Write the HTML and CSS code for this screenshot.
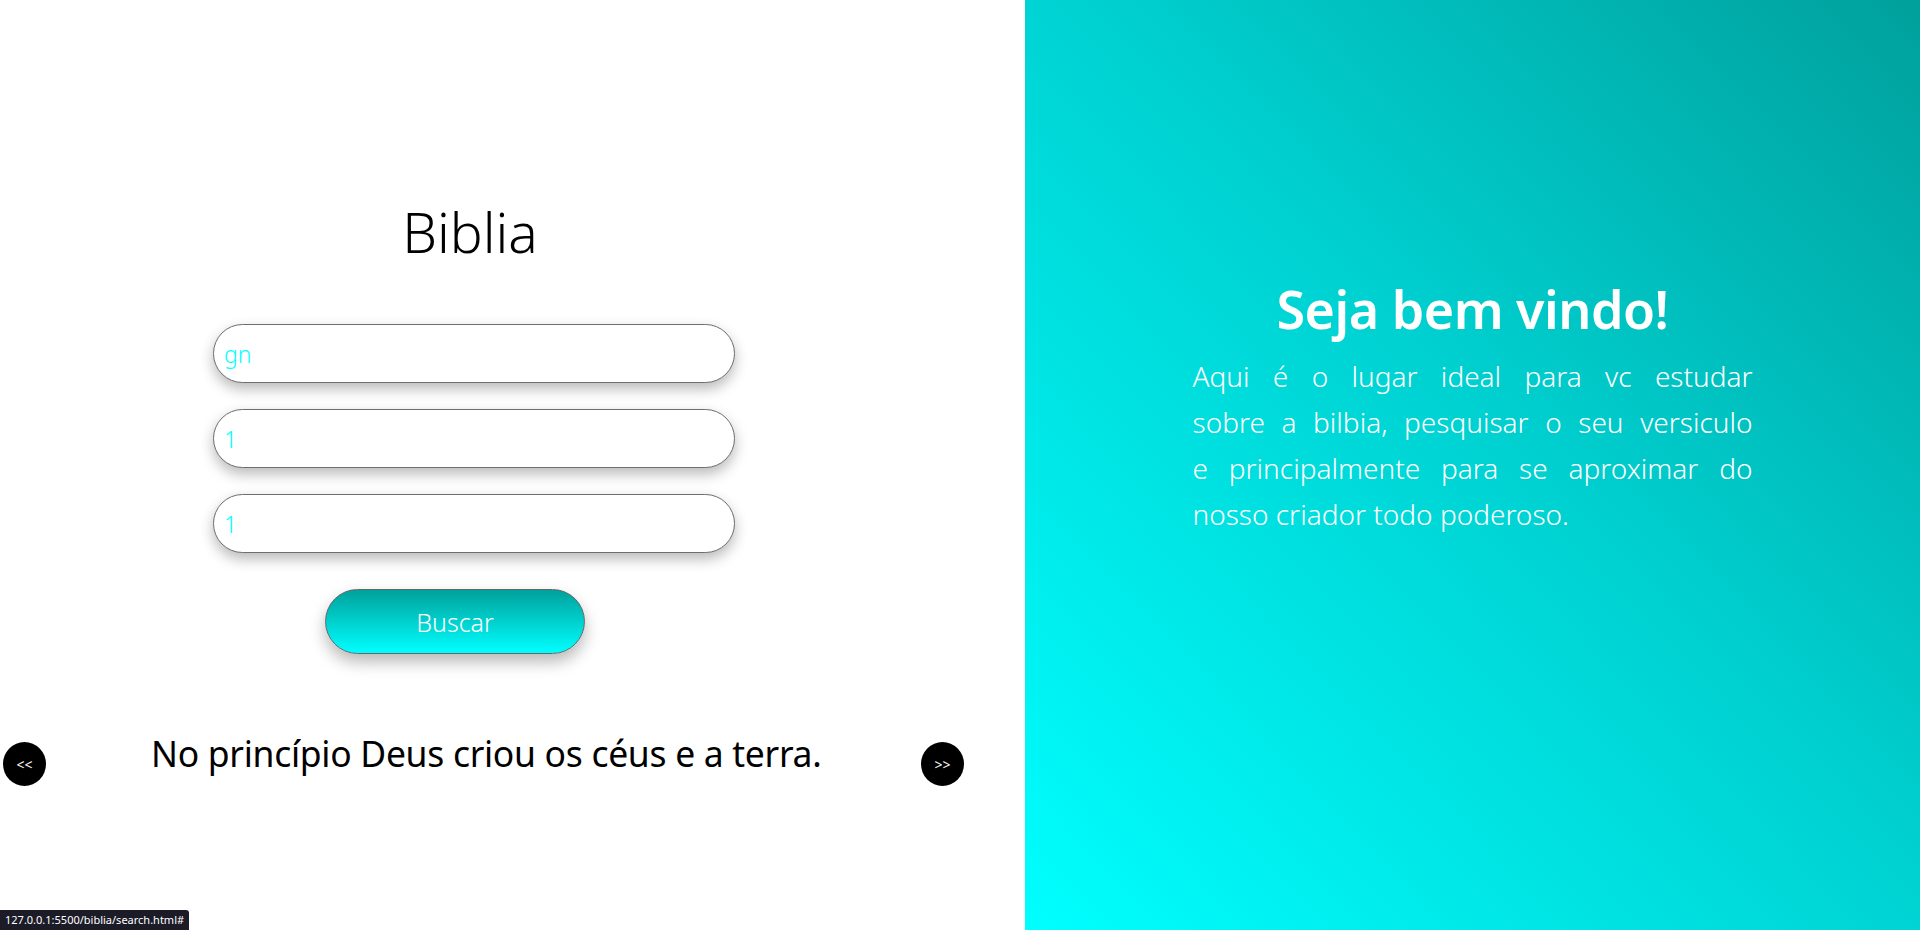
FILE: index.html
```html
<!DOCTYPE html>
<html lang="pt-BR">
<head>
<meta charset="utf-8">
<title>Biblia</title>
<link rel="stylesheet" href="styles.css">
</head>
<body>
<main class="page">
  <section class="left">
    <div class="search">
      <h1 class="title">Biblia</h1>
      <form class="form">
        <input class="field" type="text" value="gn">
        <input class="field" type="text" value="1">
        <input class="field" type="text" value="1">
        <button class="btn" type="button">Buscar</button>
      </form>
    </div>
    <div class="verse-row">
      <a class="nav nav-prev" href="#">&lt;&lt;</a>
      <p class="verse">No princípio Deus criou os céus e a terra.</p>
      <a class="nav nav-next" href="#">&gt;&gt;</a>
    </div>
  </section>
  <section class="right">
    <h2 class="welcome">Seja bem vindo!</h2>
    <p class="intro">
      <span class="line">Aqui é o lugar ideal para vc estudar</span>
      <span class="line">sobre a bilbia, pesquisar o seu versiculo</span>
      <span class="line">e principalmente para se aproximar do</span>
      <span class="line line-last">nosso criador todo poderoso.</span>
    </p>
  </section>
</main>
<div class="status">127.0.0.1:5500/biblia/search.html#</div>
</body>
</html>
```
FILE: styles.css
```css
html, body {
  margin: 0;
  padding: 0;
  height: 100%;
}
body {
  font-family: "Noto Sans", "Open Sans", sans-serif;
  background: #fff;
  overflow: hidden;
}
.page {
  display: flex;
  height: 930px;
}
.left {
  width: 1025px;
  flex: none;
  display: flex;
  flex-direction: column;
}
.search {
  width: 522px;
  margin-left: 213px;
  padding-top: 204px;
}
.title {
  margin: 0;
  text-align: center;
  font-weight: 300;
  font-size: 55px;
  line-height: 56px;
  color: #000;
  padding-right: 8px;
}
.form {
  margin-top: 64px;
  display: flex;
  flex-direction: column;
  gap: 26px;
}
.field {
  box-sizing: border-box;
  width: 522px;
  height: 59px;
  border: 1px solid #6e6e6e;
  border-radius: 30px;
  padding: 0 10px;
  font-family: inherit;
  font-weight: 300;
  font-size: 23px;
  color: #00ffff;
  background: #fff;
  box-shadow: 0 6px 14px rgba(0, 0, 0, 0.28);
  outline: none;
}
.btn {
  box-sizing: border-box;
  width: 260px;
  height: 65px;
  margin-left: 112px;
  margin-top: 10px;
  border: 1px solid #666;
  border-radius: 33px;
  background: linear-gradient(to bottom, #00a19b, #00ffff);
  color: #fff;
  font-family: inherit;
  font-weight: 300;
  font-size: 25px;
  box-shadow: 0 8px 16px rgba(0, 0, 0, 0.28);
  cursor: pointer;
}
.verse-row {
  display: flex;
  align-items: center;
  margin-top: 75px;
  padding-left: 3px;
}
.nav {
  width: 43px;
  height: 44px;
  border-radius: 50%;
  background: #000;
  color: #fff;
  font-size: 14px;
  display: flex;
  align-items: center;
  justify-content: center;
  text-decoration: none;
  flex: none;
}
.verse {
  margin: 0 0 22px 105px;
  width: 770px;
  font-size: 35.5px;
  font-weight: 400;
  letter-spacing: -0.3px;
  color: #000;
}
.right {
  flex: 1;
  background: linear-gradient(to top right, #00ffff 0%, #00cfcf 55%, #00a09c 100%);
  color: #fff;
  display: flex;
  flex-direction: column;
  align-items: center;
  padding-top: 277px;
  box-sizing: border-box;
}
.welcome {
  margin: 0;
  font-size: 52px;
  font-weight: 600;
  line-height: 64px;
  letter-spacing: -0.5px;
}
.intro {
  margin: 12px 0 0 0;
  width: 560px;
  font-size: 28px;
  font-weight: 300;
  line-height: 46px;
}
.line {
  display: block;
  white-space: nowrap;
  text-align: justify;
  text-align-last: justify;
}
.line-last {
  text-align-last: left;
}
.status {
  position: fixed;
  left: 0;
  bottom: 0;
  height: 20px;
  padding: 0 5px;
  background: #1c1c28;
  color: #fff;
  font-size: 11px;
  line-height: 20px;
  border-top-right-radius: 3px;
}
```
